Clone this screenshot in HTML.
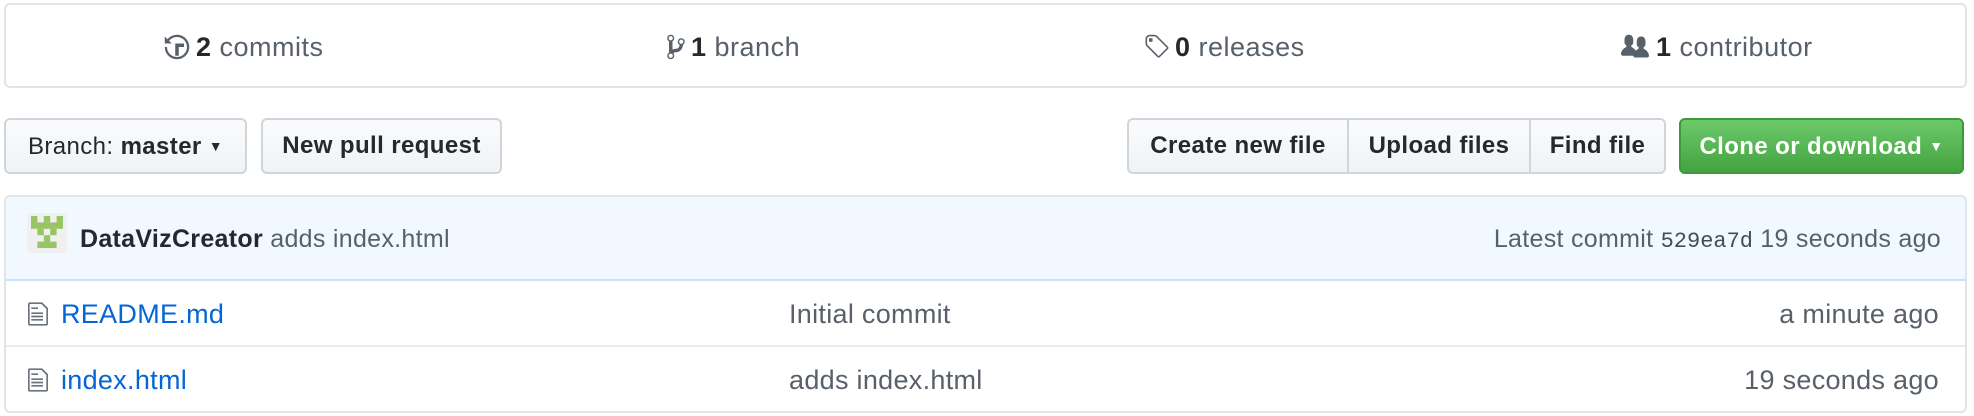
<!DOCTYPE html>
<html><head><meta charset="utf-8"><style>
*{box-sizing:border-box;margin:0;padding:0}
body{width:1974px;height:416px;background:#fff;font-family:"Liberation Sans",sans-serif;color:#24292e;position:relative;overflow:hidden}
.a{position:absolute;white-space:nowrap}
.stats{position:absolute;left:4px;top:3px;width:1963px;height:85px;border:2px solid #e1e4e8;border-radius:6px}
.st{position:absolute;top:26px;font-size:27px;letter-spacing:0.5px;color:#586069;line-height:32px}
.st b{color:#24292e}
.btn{position:absolute;top:118px;height:56px;border:2px solid #d1d5da;border-radius:6px;background:linear-gradient(#fafbfc,#eff3f6);font-size:24px;letter-spacing:0.4px;font-weight:bold;line-height:52px;text-align:center;color:#24292e}
.box{position:absolute;left:4px;top:195px;width:1963px;height:218px;border:2px solid #e1e4e8;border-radius:6px;overflow:hidden}
.hd{position:absolute;left:0;top:0;right:0;height:84px;background:#f1f8ff;border-bottom:2px solid #c8e1ff}
.row{position:absolute;left:0;right:0;height:66px;font-size:27px;letter-spacing:0.3px;line-height:66px}
.fn{position:absolute;left:55px;color:#0366d6}
.msg{position:absolute;left:783px;color:#586069}
.age{position:absolute;right:26px;color:#586069}
</style></head><body>
<div class="stats">
 <div class="st" style="left:158px"><svg width="26" height="28" viewBox="0 0 14 16" style="vertical-align:-5px;margin-right:6px"><path fill="#586069" d="M8 13H6V6h5v2H8v5zM7 1C4.81 1 2.870 2.02 1.59 3.59L0 2v4h4L2.5 4.5C3.55 3.17 5.17 2.3 7 2.3c3.140 0 5.7 2.56 5.7 5.7s-2.56 5.7-5.7 5.7S1.3 11.14 1.3 8H0c0 3.86 3.14 7 7 7s7-3.14 7-7-3.14-7-7-7z"/></svg><b>2</b> commits</div>
 <div class="st" style="left:661px"><svg width="18" height="28" viewBox="0 0 10 16" style="vertical-align:-5px;margin-right:6px"><path fill="#586069" d="M10 5c0-1.11-.89-2-2-2a1.993 1.993 0 0 0-1 3.72v.3c-.02.52-.23.98-.63 1.38-.4.4-.86.61-1.38.63-.83.02-1.48.16-2 .45V4.72a1.993 1.993 0 0 0-1-3.72C.88 1 0 1.89 0 3a2 2 0 0 0 1 1.72v6.56c-.59.35-1 .99-1 1.720 0 1.11.89 2 2 2 1.11 0 2-.89 2-2 0-.53-.2-1-.53-1.36.09-.06.48-.41.59-.47.25-.11.56-.17.94-.17 1.05-.05 1.95-.45 2.75-1.25S8.95 7.77 9 6.73h-.02C9.59 6.37 10 5.73 10 5zM2 1.8c.66 0 1.2.55 1.2 1.2 0 .65-.55 1.2-1.2 1.2C1.35 4.2.8 3.65.8 3c0-.65.55-1.2 1.2-1.2zm0 12.41c-.66 0-1.2-.55-1.2-1.2 0-.65.55-1.2 1.2-1.2.65 0 1.2.55 1.2 1.2 0 .65-.55 1.2-1.2 1.2zm6-8c-.66 0-1.2-.55-1.2-1.2 0-.65.55-1.2 1.2-1.2.65 0 1.2.55 1.2 1.2 0 .65-.55 1.2-1.2 1.2z"/></svg><b>1</b> branch</div>
 <div class="st" style="left:1137px"><svg width="26" height="28" viewBox="0 0 14 16" style="vertical-align:-5px;margin-right:6px"><path fill="#586069" d="M7.73 1.73C7.26 1.26 6.62 1 5.96 1H3.5C2.13 1 1 2.13 1 3.5v2.47c0 .66.27 1.3.73 1.77l6.06 6.06c.39.39 1.02.39 1.41 0l4.59-4.59a.996.996 0 0 0 0-1.41L7.73 1.73zM2.38 7.09c-.31-.3-.47-.7-.47-1.13V3.5c0-.88.72-1.59 1.59-1.59h2.47c.42 0 .83.16 1.13.47l6.14 6.13-4.73 4.73-6.13-6.15zM3.01 3h2v2H3V3h.01z"/></svg><b>0</b> releases</div>
 <div class="st" style="left:1614px"><svg width="30" height="28" viewBox="0 0 16 16" style="vertical-align:-5px;margin-right:6px"><path fill="#586069" d="M16 12.999c0 .439-.45 1-1 1H7.995c-.539 0-.994-.447-.995-.999H1c-.54 0-1-.561-1-1 0-2.634 3-4 3-4s.229-.409 0-1c-.841-.621-1.058-.59-1-3 .058-2.419 1.367-3 2.5-3s2.442.58 2.5 3c.058 2.41-.159 2.379-1 3-.229.59 0 1 0 1s1.549.711 2.42 2.088C9.196 9.369 10 8.999 10 8.999s.229-.409 0-1c-.841-.62-1.058-.59-1-3 .058-2.419 1.367-3 2.5-3s2.437.581 2.495 3c.059 2.41-.158 2.38-1 3-.229.59 0 1 0 1s3.005 1.366 3.005 4z"/></svg><b>1</b> contributor</div>
</div>
<div class="btn" style="left:4px;width:243px;font-weight:normal;color:#24292e">Branch: <b>master</b> <span style="font-size:14px;vertical-align:3px">▼</span></div>
<div class="btn" style="left:261px;width:241px">New pull request</div>
<div class="btn" style="left:1127px;width:539px;padding:0"><div class="a" style="left:0;width:220px;height:52px;border-right:2px solid #d1d5da">Create new file</div><div class="a" style="left:220px;width:182px;height:52px;border-right:2px solid #d1d5da">Upload files</div><div class="a" style="left:402px;width:133px">Find file</div></div>
<div class="btn" style="left:1679px;width:285px;background:linear-gradient(#6bc96a,#44a340);border-color:#3d9a3a;color:#fff">Clone or download <span style="font-size:14px;vertical-align:3px">▼</span></div>
<div class="box">
 <div class="hd">
  <svg class="a" style="left:21px;top:16px" width="40" height="40" viewBox="0 0 40 40"><rect width="40" height="40" rx="3" fill="#f0f0f0"/><g fill="#99c466"><rect x="4" y="3" width="6.4" height="6.4"/><rect x="16.8" y="3" width="6.4" height="6.4"/><rect x="29.6" y="3" width="6.4" height="6.4"/><rect x="4" y="9.4" width="32" height="6.4"/><rect x="10.4" y="15.8" width="6.4" height="6.4"/><rect x="23.2" y="15.8" width="6.4" height="6.4"/><rect x="16.8" y="22.2" width="6.4" height="6.4"/><rect x="10.4" y="28.6" width="19.2" height="6.4"/></g></svg>
  <div class="a" style="left:74px;top:26px;font-size:25px;letter-spacing:0.3px;line-height:32px"><b>DataVizCreator</b> <span style="color:#586069">adds index.html</span></div>
  <div class="a" style="right:24px;top:26px;font-size:25px;letter-spacing:0.3px;line-height:32px;color:#586069">Latest commit <span style="font-family:'Liberation Mono',monospace;font-size:22px;letter-spacing:0;color:#444d56">529ea7d</span> 19 seconds ago</div>
 </div>
 <div class="row" style="top:84px;border-bottom:2px solid #eaecef">
  <svg class="a" style="left:22px;top:19px" width="20" height="28" viewBox="0 0 12 16"><path fill="#6a737d" d="M6 5H2V4h4v1zM2 8h7V7H2v1zm0 2h7V9H2v1zm0 2h7v-1H2v1zm10-7.5V14c0 .55-.45 1-1 1H1c-.55 0-1-.45-1-1V2c0-.55.45-1 1-1h7.5L12 4.5zM11 5L8 2H1v12h10V5z"/></svg>
  <span class="fn">README.md</span><span class="msg">Initial commit</span><span class="age">a minute ago</span></div>
 <div class="row" style="top:150px">
  <svg class="a" style="left:22px;top:19px" width="20" height="28" viewBox="0 0 12 16"><path fill="#6a737d" d="M6 5H2V4h4v1zM2 8h7V7H2v1zm0 2h7V9H2v1zm0 2h7v-1H2v1zm10-7.5V14c0 .55-.45 1-1 1H1c-.55 0-1-.45-1-1V2c0-.55.45-1 1-1h7.5L12 4.5zM11 5L8 2H1v12h10V5z"/></svg>
  <span class="fn">index.html</span><span class="msg">adds index.html</span><span class="age">19 seconds ago</span></div>
</div>
</body></html>
